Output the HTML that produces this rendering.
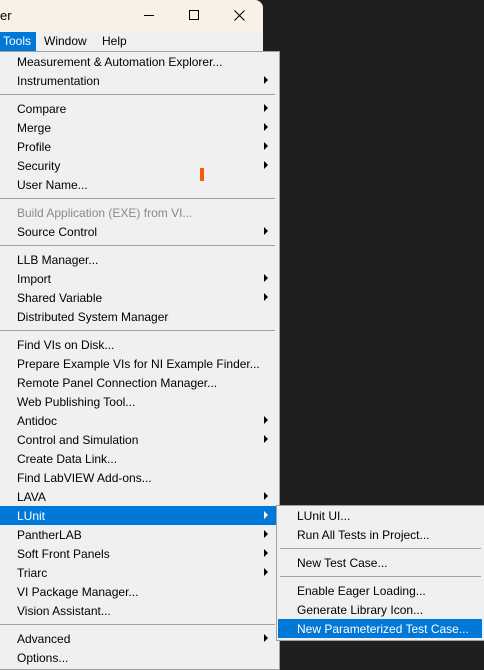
<!DOCTYPE html>
<html><head><style>
*{margin:0;padding:0;box-sizing:border-box}
body{width:484px;height:670px;background:#1f1f1f;position:relative;overflow:hidden;font-family:"Liberation Sans",sans-serif;font-size:12px;color:#000}
.tb{position:absolute;left:0;top:0;width:263px;height:32px;background:#f9f1e8;border-top-right-radius:8px}
.mb{position:absolute;left:0;top:32px;width:263px;height:19px;background:#f0f0f0}
.mb span{position:absolute;top:0;line-height:19px}
.dd{position:absolute;left:0;top:51px;width:280px;height:619px;background:#f0f0f0;border:1px solid #a0a0a0;border-left:none}
.sm{position:absolute;left:276px;top:505px;width:208px;height:136px;background:#f0f0f0;border:1px solid #a0a0a0;border-right:none}
.it{position:absolute;left:0;height:19px;line-height:20px;padding-left:17px;white-space:nowrap}
.hl{background:#0078d7;color:#fff}
.dis{color:#8a8a8a}
.ar{position:absolute;width:0;height:0;border-top:4px solid transparent;border-bottom:4px solid transparent;border-left:4px solid #000}
.sep{position:absolute;height:1px;background:#a0a0a0}
</style></head><body>
<div class="tb">
<span style="position:absolute;left:0;top:8px;font-size:13px">er</span>
<div style="position:absolute;left:144px;top:15px;width:10px;height:1px;background:#000"></div>
<div style="position:absolute;left:189px;top:10px;width:10px;height:10px;border:1px solid #000"></div>
<svg style="position:absolute;left:234px;top:10px" width="11" height="11"><path d="M0.5 0.5L10.5 10.5M10.5 0.5L0.5 10.5" stroke="#000" stroke-width="1.1"/></svg>
</div>
<div class="mb">
<span style="left:0;width:36px;background:#0078d7;color:#fff;padding-left:3px">Tools</span>
<span style="left:44px">Window</span>
<span style="left:102px">Help</span>
</div>
<div class="dd"></div>
<div class="sm"></div>
<div id="items"></div>
<div style="position:absolute;left:200px;top:168px;width:4px;height:13px;background:#f75a0a"></div>
<script>
var L=[["Measurement & Automation Explorer...",61],["Instrumentation",80,1],["-",94],["Compare",108,1],["Merge",127,1],["Profile",146,1],["Security",165,1],["User Name...",184],["-",198],["Build Application (EXE) from VI...",212,0,"dis"],["Source Control",231,1],["-",245],["LLB Manager...",259],["Import",278,1],["Shared Variable",297,1],["Distributed System Manager",316],["-",330],["Find VIs on Disk...",344],["Prepare Example VIs for NI Example Finder...",363],["Remote Panel Connection Manager...",382],["Web Publishing Tool...",401],["Antidoc",420,1],["Control and Simulation",439,1],["Create Data Link...",458],["Find LabVIEW Add-ons...",477],["LAVA",496,1],["LUnit",515,1,"hl"],["PantherLAB",534,1],["Soft Front Panels",553,1],["Triarc",572,1],["VI Package Manager...",591],["Vision Assistant...",610],["-",624],["Advanced",638,1],["Options...",657]];
var S=[["LUnit UI...",515],["Run All Tests in Project...",534],["-",548],["New Test Case...",562],["-",576],["Enable Eager Loading...",590],["Generate Library Icon...",609],["New Parameterized Test Case...",628,0,"hl"]];
var h="";
L.forEach(function(a){if(a[0]=="-"){h+='<div class="sep" style="left:0;width:275px;top:'+a[1]+'px"></div>';return;}
h+='<div class="it '+(a[3]||"")+'" style="top:'+(a[1]-9.5)+'px;width:276px">'+a[0].replace(/&/g,"&amp;")+'</div>';
if(a[2])h+='<div class="ar" style="left:264px;top:'+(a[1]-4)+'px;'+(a[3]=="hl"?'border-left-color:#fff':'')+'"></div>';});
S.forEach(function(a){if(a[0]=="-"){h+='<div class="sep" style="left:280px;width:201px;top:'+a[1]+'px"></div>';return;}
h+='<div class="it '+(a[3]||"")+'" style="top:'+(a[1]-9.5)+'px;left:278px;width:204px;padding-left:19px">'+a[0]+'</div>';});
document.getElementById("items").innerHTML=h;
</script>
</body></html>
